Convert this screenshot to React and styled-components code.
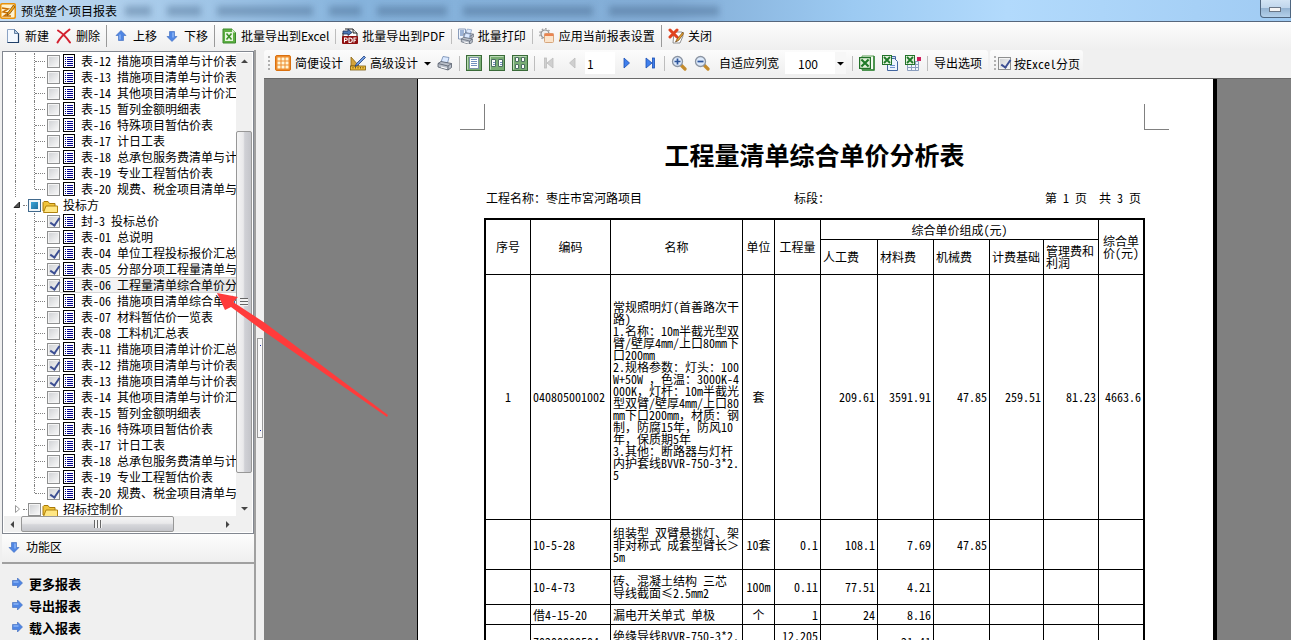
import React, { useState } from 'react';
import styled, { createGlobalStyle, css } from 'styled-components';

const uiFont = '"Noto Sans CJK SC", sans-serif';
const gridFont = '"Noto Sans Mono CJK SC", "Noto Sans CJK SC", "Liberation Mono", monospace';

const topForms = [
    { name: '表-12 措施项目清单与计价表' },
    { name: '表-13 措施项目清单与计价表' },
    { name: '表-14 其他项目清单与计价汇总表' },
    { name: '表-15 暂列金额明细表' },
    { name: '表-16 特殊项目暂估价表' },
    { name: '表-17 计日工表' },
    { name: '表-18 总承包服务费清单与计价表' },
    { name: '表-19 专业工程暂估价表' },
    { name: '表-20 规费、税金项目清单与计价表' },
];

const bidForms = [
    { name: '封-3 投标总价', checked: true },
    { name: '表-01 总说明' },
    { name: '表-04 单位工程投标报价汇总表', checked: true },
    { name: '表-05 分部分项工程量清单与计价表', checked: true },
    { name: '表-06 工程量清单综合单价分析表', checked: true, selected: true },
    { name: '表-06 措施项目清单综合单价分析表' },
    { name: '表-07 材料暂估价一览表' },
    { name: '表-08 工料机汇总表' },
    { name: '表-11 措施项目清单计价汇总表', checked: true },
    { name: '表-12 措施项目清单与计价表', checked: true },
    { name: '表-13 措施项目清单与计价表', checked: true },
    { name: '表-14 其他项目清单与计价汇总表' },
    { name: '表-15 暂列金额明细表' },
    { name: '表-16 特殊项目暂估价表' },
    { name: '表-17 计日工表' },
    { name: '表-18 总承包服务费清单与计价表' },
    { name: '表-19 专业工程暂估价表' },
    { name: '表-20 规费、税金项目清单与计价表', checked: true },
];

const lampName = `常规照明灯(首善路次干
路)
1.名称：10m半截光型双
臂/壁厚4mm/上口80mm下
口200mm
2.规格参数：灯头：100
W+50W ，色温：3000K-4
000K，灯杆：10m半截光
型双臂/壁厚4mm/上口80
mm下口200mm，材质：钢
制，防腐15年，防风10
年，保质期5年
3.其他：断路器与灯杆
内护套线BVVR-750-3*2.
5
 `;

const rows = [
    { height: 245, cells: ['1', '040805001002', lampName, '套', '', '209.61', '3591.91', '47.85', '259.51', '81.23', '4663.6'] },
    { height: 50, cells: ['', '10-5-28', '组装型 双臂悬挑灯、架\n非对称式 成套型臂长＞\n5m', '10套', '0.1', '108.1', '7.69', '47.85', '', '', ''] },
    { height: 35, cells: ['', '10-4-73', '砖、混凝土结构 三芯\n导线截面≤2.5mm2', '100m', '0.11', '77.51', '4.21', '', '', '', ''] },
    { height: 20, cells: ['', '借4-15-20', '漏电开关单式 单极', '个', '1', '24', '8.16', '', '', '', ''] },
    { height: 35, cells: ['', 'Z0200000504', '绝缘导线BVVR-750-3*2.\n5', '', '12.205\n5', '', '21.41', '', '', '', ''] },
];

const columns = [45, 80, 132, 32, 46, 57, 56, 56, 54, 55, 44];

/* ---------- icons ---------- */

const Svg = ({ children, size = 16 }) => (
    <svg width={size} height={size} viewBox="0 0 16 16" aria-hidden="true">{children}</svg>
);

const AppIcon = () => (
    <Svg>
        <rect x="0" y="0" width="16" height="16" rx="2" fill="#e8920c" />
        <rect x="1.5" y="1.5" width="13" height="13" rx="1" fill="#fff3d0" />
        <path d="M2 5l6 1-5 3 5 1-4 3h7" stroke="#c86f00" strokeWidth="1.5" fill="none" />
        <path d="M13.5 2L8 9.5l-1 3 2.5-1.5L15 4z" fill="#f3a51f" stroke="#7c4a08" strokeWidth=".8" />
    </Svg>
);

const NewIcon = () => (
    <Svg>
        <path d="M2.5 1.5h7l4 4v9h-11z" fill="#f4f9ff" stroke="#8ba3c4" />
        <path d="M13.5 5v9.5h-11" fill="none" stroke="#1f3f68" strokeWidth="1.2" />
        <path d="M9.5 1.5v4h4z" fill="#b9cfe8" stroke="#46688f" strokeWidth=".8" />
    </Svg>
);

const DeleteIcon = () => (
    <Svg>
        <path d="M2 2.5C6 5 11 10 14 14.5M13.5 1.5C9 5 4 10 1.5 14.5" stroke="#d3202f" strokeWidth="2" fill="none" strokeLinecap="round" />
    </Svg>
);

const BlueArrow = ({ turn = 0 }) => (
    <Svg>
        <g transform={`rotate(${turn} 8 8)`}>
            <path d="M8 2.5l5 5h-2.5V12.500h-5V7.500H3z" fill="#4f86e4" stroke="#3a68bc" strokeWidth=".6" />
            <path d="M7 6.5v5" stroke="#a8caff" />
        </g>
    </Svg>
);

const ExcelFileIcon = () => (
    <Svg>
        <path d="M2 1h9l3.5 3.5V15H2z" fill="#5fb044" stroke="#3a8a2b" />
        <rect x="4" y="4" width="8" height="9" fill="#e9f7e2" />
        <path d="M5.5 5.5l5 6M10.5 5.5l-5 6" stroke="#3b9327" strokeWidth="1.6" />
        <path d="M11 1v3.5h3.5z" fill="#d8efce" />
    </Svg>
);

const PdfIcon = () => (
    <Svg>
        <path d="M3 1h8l4 4v10H1V5" fill="#fff" stroke="#222" />
        <path d="M11 1v4h4" fill="#ddd" stroke="#222" />
        <path d="M1 3h5V1l4 3.5-4 3V6H1z" fill="#4a78b8" stroke="#1d2f55" strokeWidth=".8" />
        <rect x="0" y="8" width="16" height="8" rx="1" fill="#8e1010" />
        <path d="M2.5 14.5V10H4a1.2 1.2 0 0 1 0 2.5H2.5M7 10v4.5h1a2 2 0 0 0 0-4.5zM12 14.5V10h2.5M12 12.3h2" stroke="#fff" strokeWidth="1.1" fill="none" />
    </Svg>
);

const PrinterShape = () => (
    <g>
        <path d="M4 7l2-5.5 6 1L10.5 8z" fill="#dbe9ff" stroke="#6d86ad" strokeWidth=".8" />
        <path d="M1 8.5l3-2 10.5 2v4L11 15 1 12z" fill="#b9bfc9" stroke="#555d6b" strokeWidth=".8" />
        <path d="M1 8.5l10 2.5 3.5-2.5M11 11v4" fill="none" stroke="#555d6b" strokeWidth=".8" />
        <path d="M4 12l6 1.5" stroke="#fff" strokeWidth="1.2" />
    </g>
);

const PrintIcon = () => <Svg><PrinterShape /></Svg>;

const BatchPrintIcon = () => (
    <Svg>
        <path d="M.5 1h7v10h-7z" fill="#eef4fc" stroke="#6f87ab" strokeWidth=".8" />
        <path d="M2 3h4M2 5h4M2 7h3" stroke="#4b73b0" />
        <g transform="translate(5 0) scale(.72)"><PrinterShape /></g>
        <g transform="translate(2.5 4) scale(.82)"><PrinterShape /></g>
    </Svg>
);

const ApplyIcon = () => (
    <Svg>
        <circle cx="6" cy="6" r="4" fill="#eee" stroke="#8d8d8d" strokeWidth="1.2" />
        <circle cx="6" cy="6" r="5.3" fill="none" stroke="#999" strokeWidth="1.2" strokeDasharray="1.5 2" />
        <rect x="5.5" y="5.5" width="9" height="9" rx="1" fill="#fbe4cb" stroke="#d7a67c" />
        <rect x="5.5" y="5.5" width="9" height="2.5" fill="#ea8350" />
    </Svg>
);

const CloseIcon = () => (
    <Svg>
        <path d="M6 4h8l1 4-3 7H5z" fill="#fff" stroke="#777" strokeWidth=".8" />
        <path d="M2 2l7 7M9 2L2 9" stroke="#e0431f" strokeWidth="3" strokeLinecap="round" />
        <path d="M15 4l-6 7-1.5 3 3-1.5 5-6.5z" fill="#eba42c" stroke="#64421a" strokeWidth=".7" />
    </Svg>
);

const GridIcon = () => (
    <Svg>
        <rect x=".5" y=".5" width="15" height="15" rx="1.5" fill="#ee8c2c" stroke="#d9700f" />
        {[2, 6, 10].map((y) => [2, 6, 10].map((x) => (
            <rect key={`${x}-${y}`} x={x + .5} y={y + .5} width="3" height="3" fill="#fff6d8" />
        )))}
    </Svg>
);

const DesignIcon = () => (
    <Svg>
        <path d="M1 2v9h8z" fill="#d4a43c" stroke="#8a6412" strokeWidth=".8" />
        <rect x=".5" y="11" width="15" height="4" fill="#f2bf3a" stroke="#7a5a10" strokeWidth=".8" />
        <path d="M3 12v1.5M5.5 12v1.5M8 12v1.5M10.5 12v1.5M13 12v1.5" stroke="#5c430a" strokeWidth=".8" />
        <path d="M14 1l1.5 1.5L8 10l-3 1.5L6.5 8.5z" fill="#6f9be0" stroke="#20407e" strokeWidth=".8" />
    </Svg>
);

const ViewFrame = ({ children }) => (
    <Svg>
        <rect x=".5" y=".5" width="15" height="15" fill="#79ad74" stroke="#3a6b39" />
        <path d="M1.5 14.5v-13h13" fill="none" stroke="#b9d9b4" />
        {children}
    </Svg>
);

const OnePageIcon = () => (
    <ViewFrame>
        <rect x="3.5" y="2.5" width="9" height="11" fill="#fff" stroke="#7f93a8" />
        <path d="M5 4.5h6M5 6.5h6M5 8.5h6M5 10.5h6" stroke="#7390bf" />
    </ViewFrame>
);

const TwoPageIcon = () => (
    <ViewFrame>
        <path d="M2.5 4.5h4v7h-4zM9.5 4.5h4v7h-4z" fill="#fff" stroke="#4d6e63" />
        <path d="M4 7.5h2M4 9.5h2M11 7.5h2M11 9.5h2" stroke="#7390bf" />
    </ViewFrame>
);

const FourPageIcon = () => (
    <ViewFrame>
        <path d="M3.5 2.5h3v4h-3zM9.5 2.5h3v4h-3zM3.5 9.5h3v4h-3zM9.5 9.5h3v4h-3z" fill="#fff" stroke="#4d6e63" />
    </ViewFrame>
);

const StepIcon = ({ back, bar, off }) => (
    <Svg>
        <g transform={back ? 'matrix(-1 0 0 1 16 0)' : undefined} fill={off ? '#cfcfcf' : '#3f7fec'} stroke={off ? '#bcbcbc' : '#1b4fb5'} strokeWidth=".8">
            <path d={bar ? 'M4 3v10l6-5z' : 'M5 3v10l5.5-5z'} />
            {bar && <rect x="10.5" y="3" width="2" height="10" />}
        </g>
    </Svg>
);

const ZoomIcon = ({ plus }) => (
    <Svg>
        <path d="M10.5 10.5l3.5 3.5" stroke="#c48b2c" strokeWidth="3.2" strokeLinecap="round" />
        <circle cx="6.5" cy="6.5" r="5" fill="#dce9fa" stroke="#8b94a2" strokeWidth="1.3" />
        <path d={plus ? 'M3.5 6.5h6M6.5 3.5v6' : 'M3.5 6.5h6'} stroke="#2d559b" strokeWidth="1.7" />
    </Svg>
);

const XMark = () => (
    <g>
        <rect x=".5" y=".5" width="9" height="9" fill="#e4f2dd" stroke="#23722a" />
        <path d="M2 2l6 6M8 2L2 8" stroke="#1f7a28" strokeWidth="1.8" />
    </g>
);

const ExcelIcon = () => (
    <Svg>
        <path d="M3 1h12v14H3z" fill="#f5fbf2" stroke="#5b9f55" />
        <path d="M15 1v14H3" fill="none" stroke="#2f8235" strokeWidth="1.5" />
        <g transform="translate(0 2) scale(1.2)"><XMark /></g>
    </Svg>
);

const ExcelPagesIcon = () => (
    <Svg>
        <path d="M8 1.5h5.5v12H8z" fill="#cfe0f8" stroke="#42659f" />
        <path d="M5.5 3.5h7l3 3v9h-10z" fill="#edf4ff" stroke="#42659f" />
        <path d="M8 10.5h5M8 12.5h5" stroke="#6d91cb" />
        <XMark />
    </Svg>
);

const ExcelGridIcon = () => (
    <Svg>
        <path d="M2.5 6.5h11v9h-11zM2.5 9.5h11M2.5 12.5h11M6.5 6.5v9M10.5 6.5v9" fill="#f1f6fd" stroke="#8a9dbd" />
        <XMark />
        <rect x="12" y="2" width="4" height="4" fill="#cf1d5c" />
    </Svg>
);

const FormIcon = () => (
    <svg width="12" height="14" viewBox="0 0 12 14" aria-hidden="true">
        <rect x=".5" y=".5" width="11" height="13" fill="#fff" stroke="#000" />
        <path d="M2 3.5h1M2 5.5h1M2 7.5h1M2 9.5h1M2 11.5h1M4 3.5h6M4 5.5h6M4 7.5h6M4 9.5h6M4 11.5h6" stroke="#00008c" />
    </svg>
);

const FolderIcon = () => (
    <Svg>
        <path d="M1 14V5.5l1-1h4l1.5 2H13V14z" fill="#f0c43c" stroke="#a97a09" />
        <path d="M1.5 15.5L4 9h11.5v6.5z" fill="#ffe784" stroke="#b1830f" />
    </Svg>
);

const Caret = ({ turn = 0, color = '#444' }) => (
    <svg width="7" height="7" viewBox="0 0 7 7" aria-hidden="true">
        <path transform={`rotate(${turn} 3.5 3.5)`} d="M0 2h7L3.5 5.5z" fill={color} />
    </svg>
);

const OpenMark = () => (
    <svg width="8" height="8" viewBox="0 0 8 8" aria-hidden="true">
        <path d="M6.5 1v5.5H1z" fill="#555" stroke="#222" />
    </svg>
);

const ShutMark = () => (
    <svg width="8" height="8" viewBox="0 0 8 8" aria-hidden="true">
        <path d="M2.5 .5v7l4-3.5z" fill="#fff" stroke="#999" />
    </svg>
);

/* ---------- parts ---------- */

const TreeRow = ({ item, last }) => {
    const [checked, setChecked] = useState(!!item.checked);
    return (
        <Row>
            <Trunk />
            <Elbow $last={last} />
            <Branch />
            <Tick type="checkbox" checked={checked} onChange={() => setChecked(!checked)} />
            <RowLabel $selected={item.selected}><FormIcon />{item.name}</RowLabel>
        </Row>
    );
};

const Tool = ({ icon, children, label }) => (
    <ToolButton type="button" aria-label={label}>{icon}{children}</ToolButton>
);

function App() {
    const [page, setPage] = useState('1');
    const [byPage, setByPage] = useState(true);

    return (
        <Shell>
            <GlobalStyle />
            <TitleBar>
                <AppIcon />
                <TitleText>预览整个项目报表</TitleText>
                <Smears>
                    <Smear $w={26} /><Smear $w={34} /><Smear $w={96} /><Smear $w={32} /><Smear $w={70} />
                    <Smear $w={130} /><Smear $w={110} />
                </Smears>
                <Minimize type="button" aria-label="最小化"><span /></Minimize>
            </TitleBar>

            <MainTools>
                <Tool icon={<NewIcon />}>新建</Tool>
                <Tool icon={<DeleteIcon />}>删除</Tool>
                <Divider $dark />
                <Tool icon={<BlueArrow />}>上移</Tool>
                <Tool icon={<BlueArrow turn={180} />}>下移</Tool>
                <Divider $dark />
                <Tool icon={<ExcelFileIcon />}>批量导出到Excel</Tool>
                <Divider />
                <Tool icon={<PdfIcon />}>批量导出到PDF</Tool>
                <Divider />
                <Tool icon={<BatchPrintIcon />}>批量打印</Tool>
                <Divider />
                <Tool icon={<ApplyIcon />}>应用当前报表设置</Tool>
                <Divider $dark />
                <Tool icon={<CloseIcon />}>关闭</Tool>
            </MainTools>

            <Body>
                <Side>
                    <TreeBox>
                        <TreeTop>
                            <TreeList>
                                {topForms.map((item, i) => (
                                    <TreeRow key={i} item={item} last={i === topForms.length - 1} />
                                ))}
                                <Row>
                                    <Expander><OpenMark /></Expander>
                                    <Tick type="checkbox" $partial readOnly checked={false} />
                                    <GroupLabel><FolderIcon />投标方</GroupLabel>
                                </Row>
                                {bidForms.map((item, i) => (
                                    <TreeRow key={i} item={item} last={i === bidForms.length - 1} />
                                ))}
                                <Row>
                                    <Expander><ShutMark /></Expander>
                                    <Tick type="checkbox" />
                                    <GroupLabel><FolderIcon />招标控制价</GroupLabel>
                                </Row>
                            </TreeList>
                            <VBar>
                                <BarEnd><Caret turn={180} /></BarEnd>
                                <Space $grow={62} />
                                <VThumb><Grip /></VThumb>
                                <Space $grow={27} />
                                <BarEnd><Caret /></BarEnd>
                            </VBar>
                        </TreeTop>
                        <HBar>
                            <BarEnd><Caret turn={90} /></BarEnd>
                            <HThumb><Grip $upright /></HThumb>
                            <Space $grow={45} />
                            <BarEnd><Caret turn={-90} /></BarEnd>
                        </HBar>
                    </TreeBox>
                    <SideHeader><BlueArrow turn={180} />功能区</SideHeader>
                    <Links>
                        <SideLink href="#more"><BlueArrow turn={90} />更多报表</SideLink>
                        <SideLink href="#export"><BlueArrow turn={90} />导出报表</SideLink>
                        <SideLink href="#load"><BlueArrow turn={90} />载入报表</SideLink>
                    </Links>
                </Side>

                <Splitter><Handle /></Splitter>

                <Preview>
                    <PreviewTools>
                        <ToolGroup>
                            <Dots />
                            <Tool icon={<GridIcon />}>简便设计</Tool>
                            <Tool icon={<DesignIcon />}>高级设计</Tool>
                            <DropButton type="button" aria-label="高级设计选项"><Caret color="#000" /></DropButton>
                            <Tool icon={<PrintIcon />} label="打印" />
                            <Divider />
                            <Tool icon={<OnePageIcon />} label="单页" />
                            <Tool icon={<TwoPageIcon />} label="双页" />
                            <Tool icon={<FourPageIcon />} label="四页" />
                            <Divider />
                            <Tool icon={<StepIcon back bar off />} label="首页" />
                            <Tool icon={<StepIcon back off />} label="上一页" />
                            <PageInput aria-label="页码" value={page} onChange={(e) => setPage(e.target.value)} />
                            <Tool icon={<StepIcon />} label="下一页" />
                            <Tool icon={<StepIcon bar />} label="末页" />
                            <Divider />
                            <Tool icon={<ZoomIcon plus />} label="放大" />
                            <Tool icon={<ZoomIcon />} label="缩小" />
                            <FitButton type="button">自适应列宽</FitButton>
                            <Combo>
                                <select aria-label="缩放比例" defaultValue="100"><option>100</option></select>
                                <ComboEnd><Caret color="#000" /></ComboEnd>
                            </Combo>
                            <Divider />
                            <Tool icon={<ExcelIcon />} label="导出Excel" />
                            <Tool icon={<ExcelPagesIcon />} label="导出多页" />
                            <Tool icon={<ExcelGridIcon />} label="导出表格" />
                            <Divider />
                            <Tool>导出选项</Tool>
                        </ToolGroup>
                        <ToolGroup>
                            <Dots />
                            <PageCheck>
                                <Tick type="checkbox" checked={byPage} onChange={() => setByPage(!byPage)} />
                                按Excel分页
                            </PageCheck>
                        </ToolGroup>
                    </PreviewTools>

                    <Canvas>
                        <Paper>
                            <Corners><Corner /><Corner $right /></Corners>
                            <Heading>工程量清单综合单价分析表</Heading>
                            <Info>
                                <span>工程名称：枣庄市宮河路项目</span>
                                <span>标段：</span>
                                <PageNo>第 1 页  共 3 页</PageNo>
                            </Info>
                            <Sheet>
                                <colgroup>
                                    {columns.map((w, i) => <Col key={i} $w={w} />)}
                                </colgroup>
                                <thead>
                                    <SheetRow $h={20}>
                                        <Head rowSpan={2}>序号</Head>
                                        <Head rowSpan={2}>编码</Head>
                                        <Head rowSpan={2}>名称</Head>
                                        <Head rowSpan={2}>单位</Head>
                                        <Head rowSpan={2}>工程量</Head>
                                        <Head colSpan={5}>综合单价组成(元)</Head>
                                        <Head rowSpan={2} $end>综合单{'\n'}价(元)</Head>
                                    </SheetRow>
                                    <SheetRow $h={35}>
                                        <Head $left>人工费</Head>
                                        <Head $left>材料费</Head>
                                        <Head $left>机械费</Head>
                                        <Head $left>计费基础</Head>
                                        <Head $left>管理费和{'\n'}利润</Head>
                                    </SheetRow>
                                </thead>
                                <tbody>
                                    {rows.map((row, r) => (
                                        <SheetRow key={r} $h={row.height}>
                                            {row.cells.map((text, c) => (
                                                <Cell
                                                    key={c}
                                                    $align={c === 0 || c === 3 ? 'center' : c < 3 ? 'left' : 'right'}
                                                    $end={c === 10}
                                                >
                                                    {text}
                                                </Cell>
                                            ))}
                                        </SheetRow>
                                    ))}
                                </tbody>
                            </Sheet>
                        </Paper>
                    </Canvas>
                </Preview>
            </Body>

            <Pointer width="172" height="126" viewBox="0 0 172 126" aria-hidden="true">
                <path d="M0 1l21 4-5 5 32 21 123 92-1 2L45 38 14 15l-6 3z" fill="#ff3b3b" />
            </Pointer>
        </Shell>
    );
}

/* ---------- styles ---------- */

const GlobalStyle = createGlobalStyle`
    * {
        box-sizing: border-box;
    }

    body {
        margin: 0;
        background: #f0f0f0;
        color: #000;
        font-family: ${uiFont};
        font-size: 12px;
    }

    button, input, select {
        margin: 0;
        font: inherit;
        color: inherit;
    }

    svg {
        display: block;
        flex: none;
    }
`;

const Shell = styled.div`
    position: relative;
    height: 100vh;
    display: flex;
    flex-direction: column;
    overflow: hidden;
`;

const TitleBar = styled.header`
    display: flex;
    align-items: center;
    flex: none;
    height: 22px;
    border-bottom: 1px solid #56677d;
    background: linear-gradient(90deg, #c5dcf2 0, #a8cbea 12%, #86b3dc 28%, #83add6 52%, #9ccaf2 66%, #b2dafc 78%, #a0cbf3 100%);
`;

const TitleText = styled.span`
    margin-left: 5px;
    line-height: 20px;
    white-space: nowrap;
`;

const Smears = styled.div`
    flex: 1;
    display: flex;
    gap: 16px;
    overflow: hidden;
    padding: 5px 8px;
    filter: blur(3px);
`;

const Smear = styled.span`
    flex: none;
    width: ${(p) => p.$w}px;
    height: 10px;
    background: rgba(58, 88, 125, 0.36);
`;

const Minimize = styled.button`
    align-self: flex-start;
    width: 31px;
    height: 18px;
    padding: 0 9px 4px 8px;
    border: 1px solid #4f6680;
    border-width: 0 1px 1px 1px;
    border-radius: 0 0 0 4px;
    background: linear-gradient(#d3e4f4 0, #c0d6ec 45%, #95b4d2 50%, #b4d0ea 100%);

    span {
        display: block;
        width: 12px;
        height: 5px;
        margin-top: 6px;
        border: 1px solid #6a7686;
        background: #f4f4f4;
    }
`;

const MainTools = styled.nav`
    display: flex;
    align-items: center;
    flex: none;
    gap: 1px;
    height: 28px;
    padding: 0 2px;
    background: linear-gradient(#fdfdfd, #efefef);
`;

const ToolButton = styled.button`
    display: flex;
    align-items: center;
    gap: 4px;
    flex: none;
    height: 22px;
    padding: 0 3px;
    border: 0;
    background: none;
    line-height: 16px;
    white-space: nowrap;
`;

const FitButton = styled(ToolButton)`
    padding: 0 5px;
`;

const DropButton = styled(ToolButton)`
    padding: 0 2px;
`;

const Divider = styled.span`
    flex: none;
    width: 1px;
    height: ${(p) => (p.$dark ? 22 : 15)}px;
    margin: 0 2px;
    background: ${(p) => (p.$dark ? '#999' : '#bdbdbd')};
`;

const Body = styled.div`
    flex: 1;
    display: flex;
    min-height: 0;
`;

const Side = styled.aside`
    display: flex;
    flex-direction: column;
    flex: none;
    width: 256px;
    padding: 1px 0 0 2px;
    border-right: 2px solid #a0a0a0;
`;

const TreeBox = styled.div`
    flex: 1;
    display: flex;
    flex-direction: column;
    min-height: 0;
    padding: 1px;
    border: 1px solid #828790;
    background: #fff;
`;

const TreeTop = styled.div`
    flex: 1;
    display: flex;
    min-height: 0;
`;

const TreeList = styled.div`
    flex: 1;
    min-width: 0;
    overflow: hidden;
    font-family: ${gridFont};
`;

const Row = styled.label`
    display: flex;
    align-items: center;
    height: 16px;
    line-height: 16px;
    white-space: nowrap;
`;

const Trunk = styled.span`
    flex: none;
    align-self: stretch;
    width: 19px;
    margin-left: 11px;
    border-left: 1px dotted #808080;
`;

const Elbow = styled.span`
    flex: none;
    align-self: flex-start;
    height: ${(p) => (p.$last ? 8 : 16)}px;
    border-left: 1px dotted #808080;
`;

const Branch = styled.span`
    flex: none;
    width: 10px;
    margin-right: 2px;
    border-top: 1px dotted #808080;
`;

const Tick = styled.input`
    appearance: none;
    flex: none;
    position: relative;
    width: 13px;
    height: 13px;
    border: 1px solid #8e8f8f;
    background: linear-gradient(135deg, #cdcfd2, #fbfbfb);
    box-shadow: inset 0 0 0 1px #f4f4f4;

    &:checked::after {
        content: "";
        position: absolute;
        left: 4px;
        top: 0;
        width: 4px;
        height: 8px;
        border: solid #3d4f93;
        border-width: 0 2px 2px 0;
        transform: rotate(35deg);
    }

    ${(p) => p.$partial && css`
        border-color: #41698c;
        background: linear-gradient(135deg, #45b5e8, #15608f);
        box-shadow: inset 0 0 0 2px #f0f6fa;
    `}
`;

const RowLabel = styled.span`
    flex: 1;
    display: flex;
    align-items: center;
    gap: 6px;
    height: 16px;
    padding-left: 3px;
    ${(p) => p.$selected && css`
        background: linear-gradient(90deg, #fafafa, #e3e3e3);
        box-shadow: inset 0 1px #d5d5d5, inset 0 -1px #d5d5d5;
    `}
`;

const Expander = styled.span`
    flex: none;
    display: flex;
    align-items: center;
    width: 24px;
    padding-left: 9px;

    &::after {
        content: "";
        width: 4px;
        margin-left: 2px;
        border-top: 1px dotted #808080;
    }
`;

const GroupLabel = styled.span`
    display: flex;
    align-items: center;
    gap: 5px;
    padding-left: 1px;
`;

const VBar = styled.div`
    display: flex;
    flex-direction: column;
    flex: none;
    width: 16px;
    background: #f0f0f0;
`;

const HBar = styled.div`
    display: flex;
    flex: none;
    height: 16px;
    padding-right: 16px;
    background: #f0f0f0;
`;

const BarEnd = styled.span`
    display: flex;
    align-items: center;
    justify-content: center;
    flex: none;
    width: 17px;
    height: 16px;
`;

const Space = styled.span`
    flex: ${(p) => p.$grow};
`;

const VThumb = styled.div`
    flex: 340;
    display: flex;
    align-items: center;
    justify-content: center;
    border: 1px solid #979797;
    border-radius: 2px;
    background: linear-gradient(90deg, #f5f5f5 0, #e9e9eb 45%, #d0d1d6 55%, #c4c5ca 100%);
`;

const HThumb = styled(VThumb)`
    flex: 152;
    background: linear-gradient(#f5f5f5 0, #e9e9eb 45%, #d6d7db 55%, #c4c5ca 100%);
`;

const Grip = styled.span`
    width: 8px;
    height: 8px;
    background: repeating-linear-gradient(${(p) => (p.$upright ? '90deg' : '180deg')}, #666 0 1px, #f4f4f4 1px 3px);
`;

const SideHeader = styled.div`
    display: flex;
    align-items: center;
    gap: 4px;
    flex: none;
    height: 30px;
    padding: 0 4px 3px;
    border-bottom: 2px solid #a0a0a0;
    background: linear-gradient(#fdfdfd, #efefef);
`;

const Links = styled.nav`
    flex: none;
    padding: 8px 7px 2px;
`;

const SideLink = styled.a`
    display: flex;
    align-items: center;
    gap: 4px;
    height: 22px;
    color: #000;
    font-size: 13px;
    font-weight: bold;
    text-decoration: none;
`;

const Splitter = styled.div`
    display: flex;
    align-items: center;
    justify-content: center;
    flex: none;
    width: 8px;
    padding-bottom: 4px;
    background: #f0f0f0;
`;

const Handle = styled.span`
    display: flex;
    flex-direction: column;
    justify-content: space-between;
    align-items: center;
    width: 6px;
    height: 100px;
    margin-top: 90px;
    padding: 6px 0;
    border: 1px solid #999;
    background: #f8f8f8;

    &::before, &::after {
        content: "";
        width: 1px;
        height: 1px;
        background: #1c2fa8;
    }
`;

const Preview = styled.main`
    flex: 1;
    display: flex;
    flex-direction: column;
    min-width: 0;
`;

const PreviewTools = styled.div`
    display: flex;
    flex: none;
    gap: 2px;
    height: 29px;
    padding-bottom: 2px;
    border-bottom: 1px solid #696969;
    background: #f0f0f0;
`;

const ToolGroup = styled.div`
    display: flex;
    align-items: center;
    gap: 1px;
    padding: 0 3px;
    border-radius: 3px;
    background: linear-gradient(#fcfcfc, #efefef);
`;

const Dots = styled.span`
    flex: none;
    width: 2px;
    height: 14px;
    margin: 0 1px;
    background: repeating-linear-gradient(#b0b0b0 0 2px, transparent 2px 4px);
`;

const PageInput = styled.input`
    width: 30px;
    height: 22px;
    margin-left: 1px;
    padding: 0 2px;
    border: 0;
    background: #fff;
`;

const Combo = styled.span`
    display: flex;
    height: 22px;
    margin-right: 3px;

    select {
        appearance: none;
        width: 50px;
        padding: 0 0 0 13px;
        border: 0;
        border-radius: 0;
        background: #fff;
    }
`;

const ComboEnd = styled.span`
    display: flex;
    align-items: center;
    justify-content: center;
    width: 11px;
    background: #f7f7f7;
`;

const PageCheck = styled.label`
    display: flex;
    align-items: center;
    gap: 3px;
    font-family: ${gridFont};
    white-space: nowrap;
`;

const Canvas = styled.div`
    flex: 1;
    min-height: 0;
    overflow: hidden;
    padding-left: 153px;
    background: #808080;
`;

const Paper = styled.article`
    width: 800px;
    min-height: 100%;
    padding: 25px 68px 0 66px;
    border: solid #000;
    border-width: 0 4px 0 1px;
    background: #fff;
    font-family: ${gridFont};
`;

const Corners = styled.div`
    display: flex;
    justify-content: space-between;
    margin: 0 -24px;
`;

const Corner = styled.span`
    width: 25px;
    height: 26px;
    border: solid #808080;
    border-width: ${(p) => (p.$right ? '0 0 1px 1px' : '0 1px 1px 0')};
`;

const Heading = styled.h1`
    margin: 6px 0 18px;
    font-size: 25px;
    line-height: 36px;
    text-align: center;
`;

const Info = styled.div`
    display: grid;
    grid-template-columns: 308px 1fr auto;
    padding: 0 4px 0 2px;
    margin-bottom: 12px;
    line-height: 16px;
`;

const PageNo = styled.span`
    white-space: pre;
`;

const Sheet = styled.table`
    width: 100%;
    border: 2px solid #000;
    border-spacing: 0;
    table-layout: fixed;
    line-height: 12px;
`;

const Col = styled.col`
    width: ${(p) => p.$w}px;
`;

const SheetRow = styled.tr`
    height: ${(p) => p.$h}px;
`;

const Head = styled.th`
    padding: 0 ${(p) => (p.$left ? 2 : 0)}px;
    border: solid #000;
    border-width: 0 ${(p) => (p.$end ? 0 : 1)}px 1px 0;
    font-weight: normal;
    text-align: ${(p) => (p.$left ? 'left' : 'center')};
    white-space: pre;
`;

const Cell = styled.td`
    padding: 0 2px;
    border: solid #000;
    border-width: 0 ${(p) => (p.$end ? 0 : 1)}px 1px 0;
    text-align: ${(p) => p.$align};
    white-space: pre;
`;

const Pointer = styled.svg`
    position: absolute;
    left: 217px;
    top: 292px;
    pointer-events: none;
`;

export default App;
